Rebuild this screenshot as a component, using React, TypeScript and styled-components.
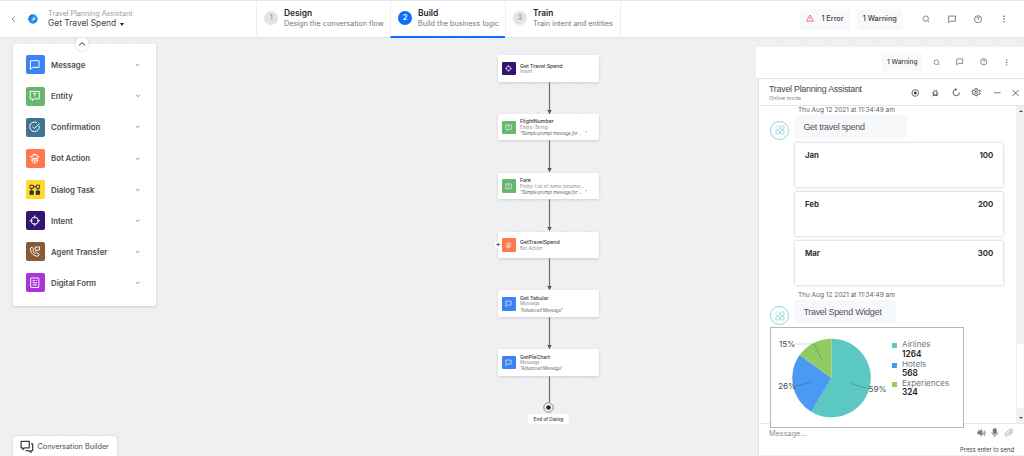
import React from "react";
import styled, { createGlobalStyle } from "styled-components";

const Global = createGlobalStyle`
  * { box-sizing: border-box; }
  body { margin: 0; font-family: Inter, "Liberation Sans", sans-serif; overflow: hidden; }
  svg { display: block; flex: none; }
`;

const Page = styled.div`
  width: 1024px;
  height: 456px;
  display: flex;
  flex-direction: column;
  background: #eff0f2;
  overflow: hidden;
`;

interface TextProps {
  $size: number;
  $color?: string;
  $weight?: number;
  $lh?: number;
  $ls?: number;
  $arial?: boolean;
  $italic?: boolean;
}

const Text = styled.div<TextProps>`
  ${(p) => (p.$arial ? 'font-family: "Liberation Sans", sans-serif;' : "")}
  font-size: ${(p) => p.$size}px;
  line-height: ${(p) => p.$lh ?? 12}px;
  color: ${(p) => p.$color ?? "#3f4247"};
  font-weight: ${(p) => p.$weight ?? 400};
  letter-spacing: ${(p) => p.$ls ?? 0}px;
  font-style: ${(p) => (p.$italic ? "italic" : "normal")};
  white-space: pre;
`;

/* ---------- top bar ---------- */

const TopBar = styled.header`
  height: 38px;
  flex: none;
  display: flex;
  background: #fff;
  border-top: 1px solid #e6e7e9;
  border-bottom: 1px solid #e0e2e5;
  position: relative;
  z-index: 2;
`;

const BotInfo = styled.div`
  width: 256px;
  display: flex;
  padding: 0 0 0 10px;
  align-items: center;
`;

const BotTitles = styled.div`
  margin-left: 10px;
  padding-bottom: 2px;
`;

const TitleRow = styled.div`
  display: flex;
  align-items: center;
  gap: 4px;
`;

const Caret = styled.span`
  border: 2.5px solid transparent;
  border-top: 3px solid #222;
  border-bottom: 0;
  margin-top: 3px;
`;

const Step = styled.div<{ $width: number; $active?: boolean }>`
  width: ${(p) => p.$width}px;
  height: 37px;
  display: flex;
  align-items: flex-start;
  gap: 6px;
  padding: 6px 0 0 7px;
  border-left: 1px solid #eeeff1;
  border-bottom: ${(p) => (p.$active ? "2px solid #0d6efd" : "0")};
`;

const StepNumber = styled.div<{ $active?: boolean }>`
  width: 14px;
  height: 14px;
  margin-top: 4px;
  border-radius: 50%;
  background: ${(p) => (p.$active ? "#0d6efd" : "#e3e4e6")};
  color: ${(p) => (p.$active ? "#fff" : "#a5a8ad")};
  font-size: 7.5px;
  font-weight: 600;
  line-height: 14px;
  text-align: center;
`;

const TopActions = styled.div`
  flex: 1;
  display: flex;
  align-items: flex-start;
  padding: 7.5px 0 0 179px;
  border-left: 1px solid #eeeff1;
`;

const Chip = styled.div<{ $width: number; $height: number; $gap?: number }>`
  width: ${(p) => p.$width}px;
  height: ${(p) => p.$height}px;
  margin-right: ${(p) => p.$gap ?? 0}px;
  display: flex;
  align-items: center;
  justify-content: center;
  gap: 7px;
  border-radius: 2px;
  background: #f8f9fa;
  & > svg {
    margin-bottom: 2px;
  }
`;

const IconRow = styled.div<{ $pitch: number; $height: number }>`
  display: flex;
  height: ${(p) => p.$height}px;
  align-items: center;
  & > * {
    width: ${(p) => p.$pitch}px;
    flex: none;
  }
`;

const WindowIcons = styled(IconRow)`
  & > :last-child {
    width: 17px;
  }
`;

/* ---------- canvas ---------- */

const Canvas = styled.main`
  flex: 1;
  min-height: 0;
  display: flex;
  background-color: #eff0f2;
  background-image: radial-gradient(circle at 1px 1px, #dddfe2 0.6px, transparent 1.1px),
    radial-gradient(circle at 1px 1px, #e9eaec 0.5px, transparent 1px);
  background-size: 24.27px 24px, 12.135px 12px;
  background-position: 3px 1px;
`;

const LeftColumn = styled.div`
  width: 156px;
  padding: 6px 0 0 13px;
  display: flex;
  flex-direction: column;
  justify-content: space-between;
`;

const Palette = styled.div`
  position: relative;
  height: 262px;
  padding: 5.4px 0 0 12.5px;
  border-radius: 2px;
  background: #fff;
  box-shadow: 0 1px 3px rgba(40, 45, 60, 0.16);
`;

const Collapse = styled.div`
  position: absolute;
  left: 62px;
  top: -7px;
  width: 14px;
  height: 14px;
  border-radius: 50%;
  background: #fff;
  box-shadow: 0 0 2px rgba(40, 45, 60, 0.3);
  display: flex;
  align-items: center;
  justify-content: center;
`;

const PaletteRow = styled.div`
  height: 31.15px;
  display: flex;
  align-items: center;
  padding-right: 16px;
  & > :nth-child(2) {
    flex: 1;
    margin-left: 6.5px;
  }
`;

const Tile = styled.div<{ $color: string; $size: number }>`
  width: ${(p) => p.$size}px;
  height: ${(p) => p.$size}px;
  flex: none;
  border-radius: ${(p) => (p.$size > 15 ? 2 : 1.2)}px;
  background: ${(p) => p.$color};
  display: flex;
  align-items: center;
  justify-content: center;
`;

const BuilderTab = styled.div`
  width: 104px;
  height: 20px;
  padding: 2px 0 0 7px;
  display: flex;
  align-items: center;
  gap: 4px;
  border-radius: 4px 4px 0 0;
  background: #fff;
  box-shadow: 0 0 2px rgba(40, 45, 60, 0.25);
`;

const Flow = styled.div`
  width: 599px;
  padding: 17px 156px 0 342px;
  display: flex;
  flex-direction: column;
  align-items: center;
`;

const Node = styled.div`
  position: relative;
  width: 101px;
  height: 26.5px;
  flex: none;
  display: flex;
  align-items: center;
  gap: 4.5px;
  padding: 0.5px 0 0 4px;
  border-radius: 1.5px;
  background: #fff;
  box-shadow: 0 1px 3px rgba(40, 45, 60, 0.17);
`;

const NodeText = styled.div`
  padding-top: 1px;
`;

const NodeHandle = styled.div`
  position: absolute;
  left: -3px;
  top: 10px;
  width: 6px;
  height: 6px;
  border-radius: 1px;
  background: #fff;
  color: #333;
  font-size: 7px;
  font-weight: 600;
  line-height: 6px;
  text-align: center;
`;

const EndLabel = styled.div`
  width: 41px;
  height: 10px;
  margin-top: 1.5px;
  border-radius: 2px;
  background: #fff;
  display: flex;
  justify-content: center;
`;

/* ---------- chat ---------- */

const ChatArea = styled.aside`
  width: 269px;
  height: 408px;
  margin-top: 9px;
  background: #fff;
  border-left: 1px solid #eceef0;
  display: flex;
  flex-direction: column;
`;

const ChatToolbar = styled.div`
  height: 32px;
  flex: none;
  display: flex;
  align-items: flex-start;
  padding: 6px 0 0 125.5px;
  border-bottom: 1px solid #e0e2e5;
`;

const ChatWindow = styled.section`
  flex: 1;
  min-height: 0;
  margin-left: -1px;
  border-left: 3px solid #eff0f2;
  display: flex;
  flex-direction: column;
`;

const ChatHeader = styled.div`
  height: 26.5px;
  flex: none;
  display: flex;
  justify-content: space-between;
  border-left: 1px solid #dfe1e4;
  border-bottom: 1px solid #e4e6e9;
  padding: 3.5px 0 0 10px;
`;

const ChatBody = styled.div`
  height: 318.5px;
  flex: none;
  display: flex;
  justify-content: space-between;
  border-left: 1px solid #dfe1e4;
  border-bottom: 1px solid #e4e6e9;
`;

const Messages = styled.div`
  width: 246px;
  padding-left: 11.4px;
`;

const BotRow = styled.div`
  display: flex;
  align-items: flex-start;
  gap: 5px;
`;

const Avatar = styled.div`
  width: 18.5px;
  height: 18.5px;
  margin: 6.5px 0 -2px;
  border: 1px solid #8fd8e0;
  border-radius: 50%;
  display: flex;
  align-items: center;
  justify-content: center;
`;

const Bubble = styled.div<{ $width: number }>`
  width: ${(p) => p.$width}px;
  height: 23px;
  padding: 2px 0 0 9.5px;
  border-radius: 4px;
  background: #f7f8fa;
  display: flex;
  align-items: center;
`;

const Stamp = styled.div<{ $top?: number }>`
  padding-left: 27.5px;
  height: 9px;
  margin-top: ${(p) => p.$top ?? 0}px;
`;

const MonthCard = styled.div`
  width: 208px;
  height: 43.5px;
  margin: 5.6px 0 0 24.5px;
  padding: 6px 9.5px 0 10px;
  border-radius: 1px;
  box-shadow: 0 0 2.5px rgba(60, 70, 90, 0.45);
  display: flex;
  justify-content: space-between;
`;

const ChartCard = styled.div`
  position: relative;
  width: 194px;
  height: 101px;
  margin: 4px 0 0 -0.4px;
  border: 1px solid #b4b6b8;
  background: #fff;
  display: flex;
`;

const Legend = styled.div`
  padding-top: 12.5px;
`;

const LegendItem = styled.div`
  display: flex;
  gap: 5px;
  height: 19.2px;
`;

const Swatch = styled.span<{ $color: string }>`
  width: 5px;
  height: 5px;
  margin-top: 3px;
  background: ${(p) => p.$color};
`;

const ScrollBar = styled.div`
  width: 8px;
  display: flex;
  flex-direction: column;
  justify-content: space-between;
  background: linear-gradient(#f1f1f2 0 238px, #fff 238px 302px, #f1f1f2 302px);
  border-left: 1px solid #f0f0f0;
  padding: 4px 0;
  align-items: center;
`;

const Arrow = styled.span<{ $down?: boolean }>`
  border: 2px solid transparent;
  ${(p) => (p.$down ? "border-top: 2.5px solid #555; border-bottom: 0;" : "border-bottom: 2.5px solid #555; border-top: 0;")}
`;

const Composer = styled.div`
  flex: 1;
  border-left: 1px solid #dfe1e4;
  border-bottom: 1px solid #e4e6e9;
  padding: 4px 10px 0 10px;
`;

const ComposerRow = styled.div`
  display: flex;
  justify-content: space-between;
  height: 16px;
`;

const ComposerIcons = styled.div`
  display: flex;
  gap: 4px;
  margin-right: 1px;
`;

const Hint = styled.div`
  display: flex;
  justify-content: flex-end;
`;

/* ---------- icons ---------- */

type IconName =
  | "search" | "chat" | "help" | "dots" | "warn" | "message" | "entity" | "check" | "bot" | "task"
  | "intent" | "agent" | "form" | "record" | "bug" | "refresh" | "gear" | "minus" | "close"
  | "down" | "up" | "left" | "mute" | "mic" | "clip" | "chats" | "clover";

const shapes: Record<IconName, React.ReactNode> = {
  search: <><circle cx="11" cy="11" r="8" /><path d="M17 17l4.5 4.5" /></>,
  chat: <path d="M2.5 3h19v14.5H8L2.5 22z" />,
  help: <><circle cx="12" cy="12" r="10" /><path d="M9 9.3a3 3 0 1 1 4.2 2.6c-.8.4-1.2.9-1.2 1.8M12 16.6v.6" /></>,
  dots: <g fill="currentColor" stroke="none"><circle cx="12" cy="4" r="2.2" /><circle cx="12" cy="12" r="2.2" /><circle cx="12" cy="20" r="2.2" /></g>,
  warn: <><path d="M12 3L1.5 21.5h21z" /><path d="M12 9.5v6M12 18v.8" /></>,
  message: <path d="M3 3.5h18v14H8L3 22z" />,
  entity: <><path d="M2.5 3h19v15.5H11L7 22v-3.5H2.5z" /><path d="M9 7.2h6M12 7.2v5M12 14.4v.9" /></>,
  check: <><path d="M21.3 10a10 10 0 1 1-4.8-6.6" /><path d="M7.5 11.5l4 4L22 5" /></>,
  bot: <><rect x="6" y="4" width="12" height="7.5" rx="1.5" /><path d="M9.5 7.7h.6M13.9 7.7h.6M12 1v3M3.5 6.5v3M20.5 6.5v3M4.5 14.5h15M6.5 14.5v3l3.5 3.5h4l3.5-3.5v-3M12 14.5v4" /></>,
  task: <><rect x="2" y="2.5" width="7" height="6.5" /><rect x="15" y="2.5" width="7" height="6.5" /><path d="M9 5.8h6M5.5 9v5M18.5 9v5" /><g fill="currentColor"><rect x="2" y="14.5" width="7" height="7" /><rect x="15" y="14.5" width="7" height="7" /></g></>,
  intent: <><circle cx="12" cy="12" r="7.5" /><path d="M12 1v6.5M12 16.5V23M1 12h6.5M16.5 12H23" /></>,
  agent: <><path d="M3 4.5l3.5-2 3.5 5-2 2.4c1 2.6 3 4.6 5.6 5.8l2.6-2 5 3.3-2 4C11 22.5 2 14 3 4.5z" /><path d="M13 2h9v6.5h-5L14.5 11V8.5H13z" /></>,
  form: <><rect x="3.5" y="2" width="17" height="20" rx="1" /><path d="M7.5 7.5h5M7.5 12h9M7.5 16.5h9M14.5 7.5h2" /></>,
  record: <><circle cx="12" cy="12" r="10" /><circle cx="12" cy="12" r="3.3" fill="currentColor" /></>,
  bug: <><path d="M7 18.5V10.500a5 5 0 0 1 10 0v8zM3 21.5l4-3h10l4 3M8.5 5L7 2.5M15.5 5L17 2.5M7 12H2.5M21.5 12H17" /></>,
  refresh: <><path d="M21 12.5A9 9 0 1 1 12.5 4" /><path d="M9.5 .8L13 4 9.8 7.5" /></>,
  gear: <><path d="M9.5 2h5l.8 3 2.9 1.6 3-.8 2.3 4-2.2 2.2 2.2 2.2-2.3 4-3-.8-2.9 1.6-.8 3h-5l-.8-3-2.9-1.6-3 .8-2.3-4L2.7 12 .5 9.8l2.3-4 3 .8L8.7 5z" /><circle cx="12" cy="12" r="3.6" /></>,
  minus: <path d="M1.5 12h21" />,
  close: <path d="M3 3l18 18M21 3L3 21" />,
  down: <path d="M4 8.5l8 7.5 8-7.5" />,
  up: <path d="M3 16l9-8 9 8" />,
  left: <path d="M16 3l-9 9 9 9" />,
  mute: <><path d="M2 9h4l6-5v16l-6-5H2z" fill="currentColor" /><path d="M15 8.5v7M18.5 6v12M22 9v6M3 3l18 18" /></>,
  mic: <><rect x="8" y="1" width="8" height="14" rx="4" fill="currentColor" /><path d="M4.5 11a7.5 7.5 0 0 0 15 0M12 18.5V23" /></>,
  clip: <path d="M6.5 16.5l9-8.500a1.8 1.8 0 0 1 2.6 2.6L9.5 19a4 4 0 0 1-6-5.500l10.5-9.500a5.2 5.2 0 0 1 7.5 7.2L14 18.5" />,
  chats: <><path d="M2 2.5h14.5v11.5H8l-3 3v-3H2z" /><path d="M19.5 7H22.5v12h-3v3l-3.5-3H10" /></>,
  clover: <><circle cx="6.5" cy="6.5" r="4.6" strokeOpacity="0.5" /><circle cx="17.5" cy="6.5" r="4.6" /><circle cx="6.5" cy="17.5" r="4.6" /><circle cx="17.5" cy="17.5" r="4.6" /></>,
};

function Icon({ name, size, color = "#4a4d52", stroke = 2, box = size }: {
  name: IconName; size: number; color?: string; stroke?: number; box?: number;
}) {
  return (
    <svg width={box} height={size} viewBox="0 0 24 24" fill="none" stroke="currentColor" strokeWidth={stroke} color={color} strokeLinejoin="round">
      {shapes[name]}
    </svg>
  );
}

const LogoSvg = styled.svg`
  margin-left: 11px;
`;

function BotLogo() {
  return (
    <LogoSvg width="10" height="10" viewBox="0 0 10 10">
      <circle cx="5" cy="5" r="4.7" fill="#2490ea" />
      <path d="M.6 6.5C.1 3.5 2 .8 4.7.4L2.5 3.2z" fill="#1673c9" />
      <path d="M3.5 6.8l2-3 2.2-.7-1 2.3-1.8 1z" fill="#d8edff" />
      <path d="M6.5 1l2.3 1.2" stroke="#8cc8f8" strokeWidth="0.8" />
    </LogoSvg>
  );
}

/* ---------- data ---------- */

const steps = [
  { n: 1, title: "Design", sub: "Design the conversation flow", width: 134 },
  { n: 2, title: "Build", sub: "Build the business logic", width: 115, active: true },
  { n: 3, title: "Train", sub: "Train intent and entities", width: 115 },
];

const palette: { label: string; icon: IconName; color: string; ink?: string }[] = [
  { label: "Message", icon: "message", color: "#3b82f6" },
  { label: "Entity", icon: "entity", color: "#67b76d" },
  { label: "Confirmation", icon: "check", color: "#417491" },
  { label: "Bot Action", icon: "bot", color: "#ff784b" },
  { label: "Dialog Task", icon: "task", color: "#ffda2e", ink: "#333" },
  { label: "Intent", icon: "intent", color: "#351371" },
  { label: "Agent Transfer", icon: "agent", color: "#885a36" },
  { label: "Digital Form", icon: "form", color: "#ac33d9" },
];

const nodes: { title: string; kind: string; quote?: string; icon: IconName; color: string; handle?: boolean }[] = [
  { title: "Get Travel Spend", kind: "Intent", icon: "intent", color: "#351371" },
  { title: "FlightNumber", kind: "Entity: String", quote: "\"Sample prompt message for ...   \"", icon: "entity", color: "#67b76d" },
  { title: "Fare", kind: "Entity: List of items (enumer...", quote: "\"Sample prompt message for ...   \"", icon: "entity", color: "#67b76d" },
  { title: "GetTravelSpend", kind: "Bot Action", icon: "bot", color: "#ff784b", handle: true },
  { title: "Get Tabular", kind: "Message", quote: "\"Advanced Message\"", icon: "message", color: "#3b82f6" },
  { title: "GetPieChart", kind: "Message", quote: "\"Advanced Message\"", icon: "message", color: "#3b82f6" },
];

const spend = [
  { label: "Airlines", value: 1264, color: "#5cc8c2" },
  { label: "Hotels", value: 568, color: "#4a9af4" },
  { label: "Experiences", value: 324, color: "#8fcc62" },
];

function Pie() {
  const cx = 60.5, cy = 50, r = 39.3;
  const total = spend.reduce((sum, s) => sum + s.value, 0);
  let angle = 0;
  const at = (a: number) => `${cx + r * Math.sin(a)} ${cy - r * Math.cos(a)}`;
  return (
    <svg width="121" height="99" viewBox="0 0 121 99" fontFamily="Inter, sans-serif" fontSize="8.2" fill="#4a4d52">
      {spend.map((s) => {
        const from = angle;
        angle += (s.value / total) * Math.PI * 2;
        return <path key={s.label} fill={s.color} d={`M${cx} ${cy}L${at(from)}A${r} ${r} 0 ${angle - from > Math.PI ? 1 : 0} 1 ${at(angle)}Z`} />;
      })}
      <g fill="none" stroke="#2f5550" strokeOpacity="0.5" strokeWidth="0.7">
        <path d="M51.5 32.5L43 16" />
        <path d="M43 16H24" strokeOpacity="0.3" />
        <path d="M41 54L23 58" />
        <path d="M79.5 55.5L98 61" />
      </g>
      <text x="8" y="18.5">15%</text>
      <text x="7" y="60.5">26%</text>
      <text x="97.5" y="63.5">59%</text>
    </svg>
  );
}

const Line = styled.svg`
  overflow: visible;
`;

function Connector({ end }: { end?: boolean }) {
  return (
    <Line width="8" height={end ? 26 : 32.35} viewBox={end ? "0 0 8 26" : "0 0 8 32.35"}>
      <path d={end ? "M4.5 .5V26" : "M4.5 .5V29"} stroke="#6b6d71" strokeWidth="1.2" />
      {!end && <path d="M2.3 28h4.4L4.5 32.35z" fill="#55575b" />}
    </Line>
  );
}

function BotMessage({ children, width }: { children: string; width: number }) {
  return (
    <BotRow>
      <Avatar><Icon name="clover" size={10} color="#6cc9d6" stroke={1.7} /></Avatar>
      <Bubble $width={width}><Text $arial $size={9} $color="#55505f" $ls={-0.3}>{children}</Text></Bubble>
    </BotRow>
  );
}

export default function App() {
  return (
    <Page>
      <Global />
      <TopBar>
        <BotInfo>
          <Icon name="left" size={8} color="#555" stroke={2.2} box={7} />
          <BotLogo />
          <BotTitles>
            <Text $size={7.15} $color="#9a9da2" $lh={9}>Travel Planning Assistant</Text>
            <TitleRow>
              <Text $size={8.4} $color="#3f4247" $lh={10}>Get Travel Spend</Text>
              <Caret />
            </TitleRow>
          </BotTitles>
        </BotInfo>
        {steps.map((s) => (
          <Step key={s.n} $width={s.width} $active={s.active}>
            <StepNumber $active={s.active}>{s.n}</StepNumber>
            <div>
              <Text $size={8.4} $weight={600} $color="#26282c" $lh={12}>{s.title}</Text>
              <Text $size={7.25} $color="#74777c" $lh={10}>{s.sub}</Text>
            </div>
          </Step>
        ))}
        <TopActions>
          <Chip $width={50} $height={21} $gap={6.5}>
            <Icon name="warn" size={8} color="#f0506a" stroke={2.2} />
            <Text $size={7.3} $weight={500}>1 Error</Text>
          </Chip>
          <Chip $width={46.5} $height={21} $gap={9.5}>
            <Text $size={7.3} $weight={500}>1 Warning</Text>
          </Chip>
          <IconRow $pitch={26.1} $height={21}>
            <Icon name="search" size={8} />
            <Icon name="chat" size={8.5} />
            <Icon name="help" size={8.5} />
            <Icon name="dots" size={8} />
          </IconRow>
        </TopActions>
      </TopBar>

      <Canvas>
        <LeftColumn>
          <Palette>
            <Collapse><Icon name="up" size={8} color="#333" stroke={3} /></Collapse>
            {palette.map((p) => (
              <PaletteRow key={p.label}>
                <Tile $color={p.color} $size={19}>
                  <Icon name={p.icon} size={11.5} color={p.ink ?? "#fff"} stroke={2} />
                </Tile>
                <Text $size={7.8} $weight={600} $color="#4b4e53">{p.label}</Text>
                <Icon name="down" size={5.5} color="#777" stroke={3.5} />
              </PaletteRow>
            ))}
          </Palette>
          <BuilderTab>
            <Icon name="chats" size={13.5} color="#3c3f44" stroke={2.2} />
            <Text $size={7.25} $color="#4a4d52">Conversation Builder</Text>
          </BuilderTab>
        </LeftColumn>

        <Flow>
          {nodes.map((n, i) => (
            <React.Fragment key={n.title}>
              <Node>
                {n.handle && <NodeHandle>+</NodeHandle>}
                <Tile $color={n.color} $size={13.5}>
                  <Icon name={n.icon} size={7} color="#e8eef8" stroke={2.4} />
                </Tile>
                <NodeText>
                  <Text $size={5.2} $weight={500} $color="#33363b" $lh={6.3}>{n.title}</Text>
                  <Text $size={4.6} $color="#8a8d92" $lh={6.3}>{n.kind}</Text>
                  {n.quote && <Text $size={4.5} $ls={-0.2} $color="#66696e" $lh={6.3} $italic>{n.quote}</Text>}
                </NodeText>
              </Node>
              <Connector end={i === nodes.length - 1} />
            </React.Fragment>
          ))}
          <svg width="11" height="11" viewBox="0 0 11 11">
            <circle cx="5.5" cy="5.5" r="4.7" fill="#f4f5f6" stroke="#77797d" strokeWidth="0.9" />
            <circle cx="5.5" cy="5.5" r="2.3" fill="#26282c" />
          </svg>
          <EndLabel><Text $size={4.7} $lh={10} $weight={500}>End of Dialog</Text></EndLabel>
        </Flow>

        <ChatArea>
          <ChatToolbar>
            <Chip $width={41.5} $height={18} $gap={2}>
              <Text $size={6.5} $weight={500}>1 Warning</Text>
            </Chip>
            <IconRow $pitch={23.4} $height={18}>
              <Icon name="search" size={7} />
              <Icon name="chat" size={7.5} />
              <Icon name="help" size={7.5} />
              <Icon name="dots" size={7} />
            </IconRow>
          </ChatToolbar>
          <ChatWindow>
            <ChatHeader>
              <div>
                <Text $arial $size={8.9} $lh={12} $color="#4b4453" $ls={-0.26}>Travel Planning Assistant</Text>
                <Text $size={5.4} $lh={7} $color="#8a8d92">Online mode</Text>
              </div>
              <WindowIcons $pitch={20.5} $height={20}>
                <Icon name="record" size={8} color="#222" />
                <Icon name="bug" size={8} color="#222" />
                <Icon name="refresh" size={8.5} color="#222" />
                <Icon name="gear" size={8.5} color="#222" />
                <Icon name="minus" size={7.5} color="#222" />
                <Icon name="close" size={8} color="#222" />
              </WindowIcons>
            </ChatHeader>
            <ChatBody>
              <Messages>
                <Stamp><Text $size={6.5} $lh={9} $color="#5f6267">Thu Aug 12 2021 at 11:34:49 am</Text></Stamp>
                <BotMessage width={113}>Get travel spend</BotMessage>
                {[["Jan", 100], ["Feb", 200], ["Mar", 300]].map(([month, value]) => (
                  <MonthCard key={month}>
                    <Text $size={7.8} $weight={700} $color="#333">{month}</Text>
                    <Text $size={7.8} $weight={700} $color="#333">{value}</Text>
                  </MonthCard>
                ))}
                <Stamp $top={6.2}><Text $size={6.5} $lh={9} $color="#5f6267">Thu Aug 12 2021 at 11:34:49 am</Text></Stamp>
                <BotMessage width={102}>Travel Spend Widget</BotMessage>
                <ChartCard>
                  <Pie />
                  <Legend>
                    {spend.map((s) => (
                      <LegendItem key={s.label}>
                        <Swatch $color={s.color} />
                        <div>
                          <Text $size={8.1} $lh={9.6} $color="#74777c">{s.label}</Text>
                          <Text $size={8.3} $lh={9.6} $weight={600} $color="#222">{s.value}</Text>
                        </div>
                      </LegendItem>
                    ))}
                  </Legend>
                </ChartCard>
              </Messages>
              <ScrollBar><Arrow /><Arrow $down /></ScrollBar>
            </ChatBody>
            <Composer>
              <ComposerRow>
                <Text $size={7.3} $color="#8a8d92">Message...</Text>
                <ComposerIcons>
                  <Icon name="mute" size={9.5} color="#777a80" stroke={1.8} />
                  <Icon name="mic" size={9.5} color="#66788c" stroke={1.8} />
                  <Icon name="clip" size={9.5} color="#8492a3" stroke={1.8} />
                </ComposerIcons>
              </ComposerRow>
              <Hint><Text $size={5.9} $color="#3f4247">Press enter to send</Text></Hint>
            </Composer>
          </ChatWindow>
        </ChatArea>
      </Canvas>
    </Page>
  );
}
